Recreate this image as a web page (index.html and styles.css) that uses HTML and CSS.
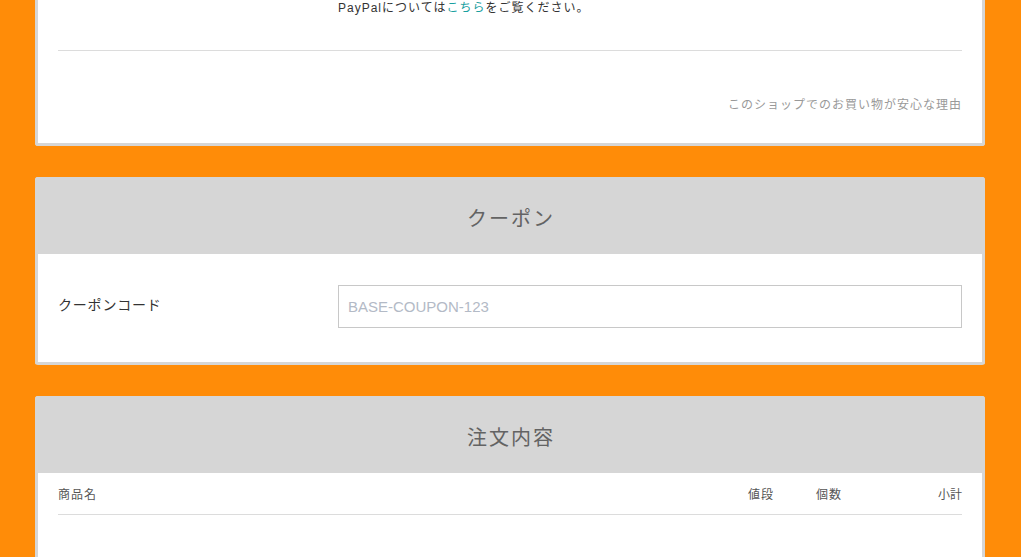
FILE: index.html
```html
<!DOCTYPE html>
<html lang="ja">
<head>
<meta charset="utf-8">
<title>注文</title>
<link rel="stylesheet" href="styles.css">
</head>
<body>
<div class="page">
  <section class="card card-first">
    <div class="body body-payment">
      <div class="row">
        <div class="label"></div>
        <p class="paypal">PayPalについては<a href="#" class="link">こちら</a>をご覧ください。</p>
      </div>
      <hr class="divider">
      <p class="reason">このショップでのお買い物が安心な理由</p>
    </div>
  </section>

  <section class="card">
    <h2 class="card-title">クーポン</h2>
    <div class="body body-coupon">
      <div class="row row-center">
        <label class="label label-coupon" for="coupon">クーポンコード</label>
        <input id="coupon" class="input" type="text" placeholder="BASE-COUPON-123">
      </div>
    </div>
  </section>

  <section class="card">
    <h2 class="card-title">注文内容</h2>
    <div class="body body-order">
      <div class="table-head">
        <span>商品名</span>
        <span>値段</span>
        <span>個数</span>
        <span class="right">小計</span>
      </div>
      <hr class="divider">
    </div>
  </section>
</div>
</body>
</html>
```

FILE: styles.css
```css
* { box-sizing: border-box; }
html, body { margin: 0; padding: 0; }
body {
  background: #ff8c08;
  font-family: "Liberation Sans", "Noto Sans CJK JP", sans-serif;
  color: #333;
  height: 557px;
  overflow: hidden;
}
.page {
  width: 950px;
  margin: 0 auto 0 35px;
  display: flex;
  flex-direction: column;
  gap: 31px;
}
.card {
  background: #fff;
  border: 3px solid #d6d6d6;
  border-top: 0;
  border-radius: 3px;
}
.card-first { border-radius: 0 0 3px 3px; }
.card-title {
  margin: 0 -3px;
  height: 77px;
  background: #d6d6d6;
  border-radius: 3px 3px 0 0;
  display: flex;
  align-items: center;
  justify-content: center;
  font-size: 20px;
  font-weight: normal;
  letter-spacing: 2px;
  color: #636363;
  padding: 3px 0 0 2px;
}
.body { padding: 0 20px; }
.row { display: flex; }
.row-center { align-items: center; }
.label { width: 280px; flex: none; }
.paypal {
  margin: 0;
  font-size: 12px;
  line-height: 17px;
  letter-spacing: 1px;
  color: #333;
}
.link { color: #19a0a0; text-decoration: none; }
.divider {
  margin: 0;
  border: 0;
  border-top: 1px solid #dcdcdc;
}
.body-payment .divider { margin-top: 33px; }
.reason {
  margin: 45px 0 0;
  padding-bottom: 29px;
  text-align: right;
  font-size: 12px;
  line-height: 18px;
  letter-spacing: 1px;
  color: #999;
}
.body-coupon { padding-top: 31px; padding-bottom: 34px; }
.label-coupon {
  font-size: 14px;
  letter-spacing: 0.8px;
  color: #333;
  padding-bottom: 5px;
}
.input {
  flex: 1;
  height: 43px;
  border: 1px solid #c8c8c8;
  padding: 0 9px;
  font-family: "Liberation Sans", sans-serif;
  font-size: 15px;
  color: #333;
  outline: none;
}
.input::placeholder { color: #b3bac6; }
.body-order { padding-top: 14px; padding-bottom: 60px; }
.table-head {
  display: grid;
  grid-template-columns: 1fr 68px 96px 50px;
  font-size: 12px;
  line-height: 17px;
  letter-spacing: 1px;
  color: #555;
  padding-bottom: 10px;
}
.right { text-align: right; letter-spacing: 0; }
```
